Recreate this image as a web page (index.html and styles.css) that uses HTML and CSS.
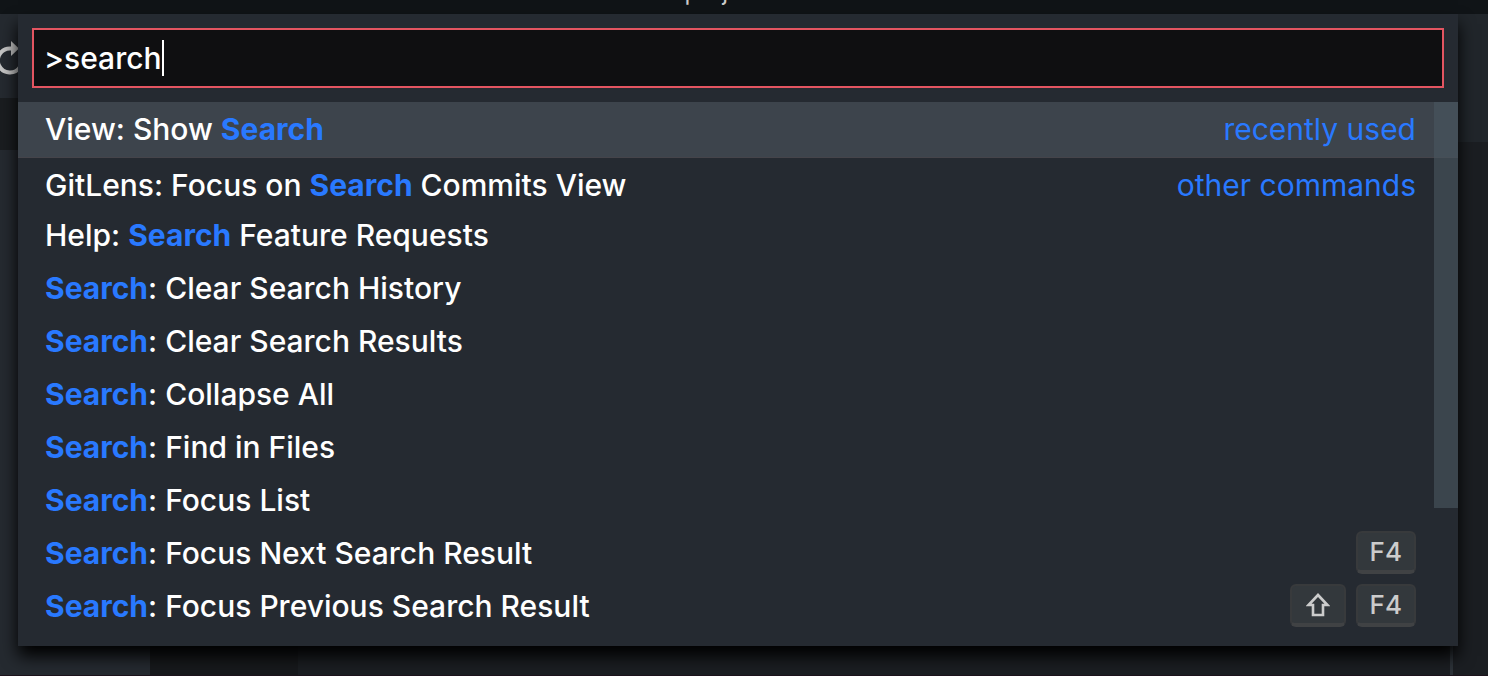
FILE: index.html
```html
<!DOCTYPE html>
<html lang="en">
<head>
<meta charset="utf-8">
<title>Command Palette</title>
<link rel="stylesheet" href="styles.css">
</head>
<body>
<div class="window">
  <header class="titlebar"><span class="titlebar-text">edit.ts — project resources.ts</span></header>
  <div class="workbench">
    <aside class="sidebar">
      <div class="sidebar-actions">
        <button class="refresh" type="button" aria-label="Refresh">
          <svg width="32" height="36" viewBox="0 0 32 36" aria-hidden="true">
            <path d="M21 8.500H18.500A12 12 0 1 0 28 27" fill="none" stroke="#c5c5c5" stroke-width="4"/>
            <path d="M19 1L27 8.500L19 16Z" fill="#c5c5c5"/>
          </svg>
        </button>
      </div>
      <div class="sidebar-section"></div>
    </aside>
    <main class="editor">
      <div class="editor-gutter"></div>
      <div class="editor-code"></div>
    </main>
    <div class="side-editor">
      <div class="side-tabs"></div>
      <div class="side-code"></div>
    </div>
  </div>

  <section class="palette" aria-label="Command palette">
    <label class="field">
      <input class="field-input" type="text" value="&gt;search" aria-label="Type a command" spellcheck="false">
      <span class="caret"></span>
    </label>
    <div class="results">
      <ul class="list">
        <li><button class="row row-active" type="button"><span class="name">View: Show <b>Search</b></span><span class="group">recently used</span></button></li>
        <li><button class="row row-first" type="button"><span class="name">GitLens: Focus on <b>Search</b> Commits View</span><span class="group">other commands</span></button></li>
        <li><button class="row" type="button"><span class="name">Help: <b>Search</b> Feature Requests</span></button></li>
        <li><button class="row" type="button"><span class="name"><b>Search</b>: Clear Search History</span></button></li>
        <li><button class="row" type="button"><span class="name"><b>Search</b>: Clear Search Results</span></button></li>
        <li><button class="row" type="button"><span class="name"><b>Search</b>: Collapse All</span></button></li>
        <li><button class="row" type="button"><span class="name"><b>Search</b>: Find in Files</span></button></li>
        <li><button class="row" type="button"><span class="name"><b>Search</b>: Focus List</span></button></li>
        <li><button class="row" type="button"><span class="name"><b>Search</b>: Focus Next Search Result</span><span class="keys"><kbd>F4</kbd></span></button></li>
        <li><button class="row" type="button"><span class="name"><b>Search</b>: Focus Previous Search Result</span><span class="keys"><kbd aria-label="Shift"><svg width="24" height="24" viewBox="0 0 24 24" aria-hidden="true"><path d="M12 2L21.500 12H17V22H7V12H2.500Z" fill="none" stroke="#cccccc" stroke-width="2.600"/></svg></kbd><kbd>F4</kbd></span></button></li>
      </ul>
      <div class="scroll-thumb"></div>
    </div>
  </section>
</div>
</body>
</html>
```

FILE: styles.css
```css
* {
  box-sizing: border-box;
}

body {
  margin: 0;
  background: #1b1e22;
  color: #ffffff;
  font-family: Inter, "Liberation Sans", sans-serif;
  font-variant-ligatures: no-contextual;
}

button,
input {
  border: 0;
  padding: 0;
  background: none;
  color: inherit;
  font: inherit;
  font-variant-ligatures: no-contextual;
}

.window {
  position: relative;
  display: flex;
  flex-direction: column;
  min-height: 100vh;
  overflow: hidden;
}

.titlebar {
  display: flex;
  justify-content: center;
  align-items: flex-end;
  height: 14px;
  overflow: hidden;
  background: #101417;
  color: #cccccc;
  font-size: 24px;
  line-height: 44px;
}

.workbench {
  display: flex;
  flex: 1;
  border-bottom: 1px solid #1d131c;
}

.sidebar {
  width: 150px;
  background: #252a30;
}

.sidebar-actions {
  height: 84px;
  padding-top: 26px;
}

.refresh {
  display: block;
  margin-left: -8px;
}

.refresh svg {
  display: block;
}

.sidebar-section {
  height: 52px;
  background: #1a1d20;
}

.editor {
  display: flex;
  flex: 1;
}

.editor-gutter {
  width: 148px;
  background: #17191c;
}

.editor-code {
  flex: 1;
  background: #1b1e22;
}

.side-editor {
  width: 38px;
  border-left: 3px solid #2c3238;
  background: #1b1e22;
}

.side-tabs {
  height: 128px;
  background: #21262b;
}

.palette {
  position: absolute;
  top: 14px;
  left: 18px;
  right: 30px;
  padding: 14px 0 10px;
  background: #252a31;
  box-shadow: 0 10px 16px #000000;
}

.field {
  display: flex;
  align-items: center;
  height: 60px;
  margin: 0 14px 14px;
  padding: 0 10px;
  border: 2px solid #e35561;
  background: #0f0f11;
}

.field-input {
  field-sizing: content;
  outline: none;
  font-size: 30px;
  font-weight: 500;
  line-height: 40px;
}

.caret {
  width: 2px;
  height: 36px;
  background: #ffffff;
}

.results {
  position: relative;
}

.list {
  margin: 0;
  padding: 0;
  list-style: none;
}

.row {
  display: flex;
  align-items: center;
  justify-content: space-between;
  width: 100%;
  height: 53px;
  padding: 0 42px 8px 27px;
  font-size: 30px;
  line-height: 40px;
  text-align: left;
}

.row-active {
  height: 56px;
  padding-bottom: 2px;
  background: #3d444c;
  border-bottom: 1px solid #45444a;
}

.row-first {
  height: 54px;
  padding-bottom: 0;
}

.name {
  font-weight: 500;
}

.name b {
  color: #2979ff;
  font-weight: 700;
}

.group {
  color: #2979ff;
}

.keys {
  display: flex;
  gap: 10px;
}

kbd {
  display: flex;
  align-items: center;
  justify-content: center;
  min-width: 56px;
  height: 43px;
  padding: 0 12px;
  border: 2px solid #383a3c;
  border-bottom: 4px solid #404244;
  border-radius: 6px;
  background: #33383c;
  color: #cccccc;
  font-family: inherit;
  font-size: 26px;
  font-weight: 500;
  line-height: 32px;
}

.scroll-thumb {
  position: absolute;
  top: 0;
  right: 0;
  width: 24px;
  height: 406px;
  background: rgba(72, 85, 96, 0.62);
}
```
